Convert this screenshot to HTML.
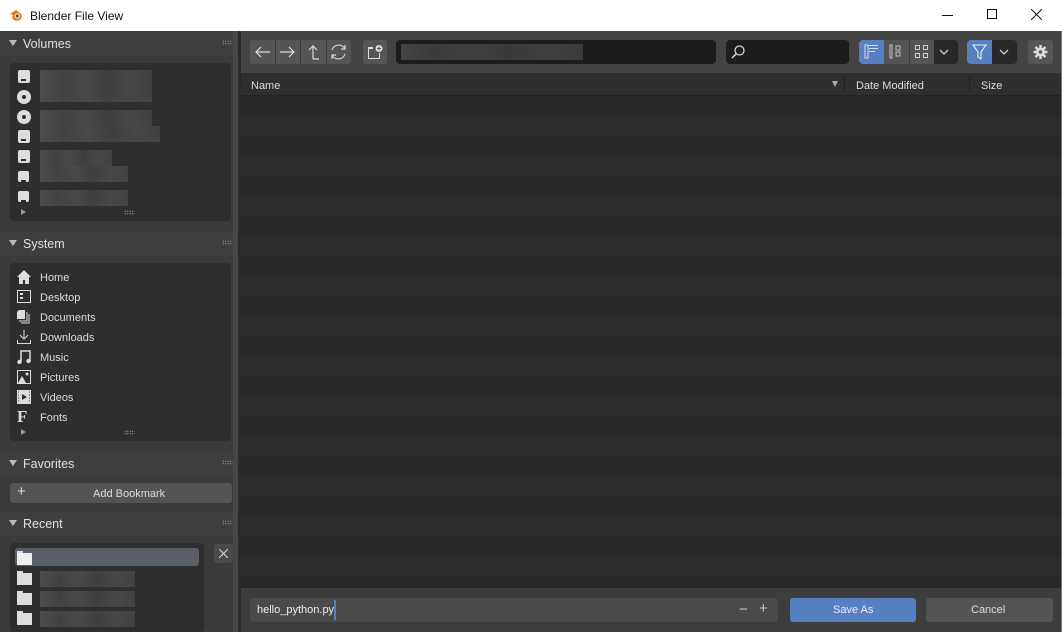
<!DOCTYPE html>
<html><head><meta charset="utf-8"><style>
*{box-sizing:border-box;margin:0;padding:0}
body{width:1062px;height:632px;overflow:hidden;background:#2b2b2b;font-family:"Liberation Sans",sans-serif;font-size:11px;color:#ddd;position:relative}
.a{position:absolute}
.title{left:0;top:0;width:1062px;height:31px;background:#fff;color:#111;font-size:12px}
.side{left:0;top:31px;width:241px;height:601px;background:#3a3a3a}
.hdr{left:0;width:233px;height:24px;background:#3e3e3e;color:#e0e0e0;font-size:12.5px}
.hdr .t{left:23px;top:5px}
.hdr .tri{left:9px;top:8px;width:0;height:0;border-left:4px solid transparent;border-right:4px solid transparent;border-top:6px solid #bbb}
.hdr .dots{left:222px;top:8px;width:11px;height:5px;background-image:radial-gradient(#999 0.6px,transparent 0.7px);background-size:2.5px 2.5px}
.box{background:#2e2e2e;border-radius:4px;left:10px;width:221px}
.row{position:absolute;left:30px;font-size:11px;color:#ddd}
.ic{position:absolute;left:7px;width:14px;height:14px}
.blur{position:absolute;left:30px;height:16px;background:linear-gradient(90deg,#555 0,#474747 20%,#505050 40%,#444 60%,#4e4e4e 80%,#474747 100%);opacity:.8}
.btn{position:absolute;background:#545454;border-radius:3px;height:23px}
.drv{position:absolute;left:8px;width:12px;height:13px;background:#ddd;border-radius:2px}
.drv:after{content:"";position:absolute;left:3px;top:9px;width:5px;height:2px;background:#2e2e2e}
.cd{position:absolute;left:7px;width:14px;height:14px;border-radius:50%;background:#ddd}
.cd:after{content:"";position:absolute;left:5px;top:5px;width:4px;height:4px;border-radius:50%;background:#2e2e2e}
.fold{position:absolute;left:7px;width:15px;height:12px;background:#ddd}
.fold:before{content:"";position:absolute;left:0;top:-2px;width:6px;height:2px;background:#ddd}
</style></head><body>
<div class="a title">
<svg class="a" style="left:9px;top:8px" width="15" height="14" viewBox="0 0 15 14"><path d="M1 6 L7 2 L11 5 Q14 7 12 11 Q9 14 5 12 Q2 10 4 7 Z" fill="#e87d0d"/><circle cx="8.3" cy="8" r="2.6" fill="#fff"/><circle cx="8.3" cy="8" r="1.6" fill="#265787"/></svg>
<span class="a" style="left:30px;top:9px">Blender File View</span>
<div class="a" style="left:942px;top:15px;width:11px;height:1px;background:#111"></div>
<div class="a" style="left:987px;top:9px;width:10px;height:10px;border:1px solid #111"></div>
<svg class="a" style="left:1031px;top:9px" width="11" height="11"><path d="M0 0L11 11M11 0L0 11" stroke="#111" stroke-width="1"/></svg>
</div>

<div class="a side"></div>
<div class="a" style="left:233px;top:31px;width:5px;height:601px;background:#474747"></div>
<div class="a" style="left:238px;top:31px;width:3px;height:601px;background:#2a2a2a"></div>

<!-- Volumes -->
<div class="a hdr" style="top:32px"><div class="a tri"></div><span class="a t">Volumes</span><div class="a dots"></div></div>
<div class="a box" style="top:63px;height:158px">
<div class="drv" style="top:7px"></div><div class="blur" style="top:7px;width:112px"></div>
<div class="cd" style="top:27px"></div><div class="blur" style="top:23px;width:112px"></div>
<div class="cd" style="top:47px"></div><div class="blur" style="top:47px;width:112px"></div>
<div class="drv" style="top:67px"></div><div class="blur" style="top:63px;width:120px"></div>
<div class="drv" style="top:87px"></div><div class="blur" style="top:87px;width:72px"></div>
<div class="drv" style="top:108px;width:11px;height:11px"></div><div class="blur" style="top:103px;width:88px"></div>
<div class="drv" style="top:128px;width:11px;height:11px"></div><div class="blur" style="top:127px;width:88px"></div>
<div class="a" style="left:11px;top:146px;border-top:3px solid transparent;border-bottom:3px solid transparent;border-left:5px solid #999"></div>
<div class="a" style="left:114px;top:147px;width:11px;height:5px;background-image:radial-gradient(#999 0.6px,transparent 0.7px);background-size:2.5px 2.5px"></div>
</div>

<!-- System -->
<div class="a hdr" style="top:232px"><div class="a tri"></div><span class="a t">System</span><div class="a dots"></div></div>
<div class="a box" style="top:263px;height:178px">
<svg class="ic" style="top:7px" viewBox="0 0 14 14"><path d="M0 7L7 0L14 7H12V14H8V10H6V14H2V7Z" fill="#ddd"/></svg><span class="row" style="top:9px">Home</span>
<svg class="ic" style="top:27px" viewBox="0 0 14 14"><rect x="0.5" y="0.5" width="13" height="12" fill="none" stroke="#ddd"/><rect x="3" y="3" width="3" height="2" fill="#ddd"/><rect x="3" y="7" width="3" height="2" fill="#ddd"/></svg><span class="row" style="top:29px">Desktop</span>
<svg class="ic" style="top:47px" viewBox="0 0 14 14"><path d="M2 0H8V9H0V2Z" fill="#ddd"/><path d="M10 2V11H2M12 4V13H4" stroke="#ddd" fill="none"/></svg><span class="row" style="top:49px">Documents</span>
<svg class="ic" style="top:67px" viewBox="0 0 14 14"><path d="M7 0V9M3 5L7 9L11 5M0.5 10V13.5H13.5V10" stroke="#ddd" fill="none"/></svg><span class="row" style="top:69px">Downloads</span>
<svg class="ic" style="top:87px" viewBox="0 0 14 14"><path d="M4 12V1H13V11" stroke="#ddd" stroke-width="1.5" fill="none"/><circle cx="2.5" cy="12" r="2.2" fill="#ddd"/><circle cx="11.5" cy="11" r="2.2" fill="#ddd"/></svg><span class="row" style="top:89px">Music</span>
<svg class="ic" style="top:107px" viewBox="0 0 14 14"><rect x="0.5" y="0.5" width="13" height="13" fill="none" stroke="#ddd"/><path d="M1 13L5 6L9 13Z" fill="#ddd"/><circle cx="10" cy="4" r="1.5" fill="#ddd"/></svg><span class="row" style="top:109px">Pictures</span>
<svg class="ic" style="top:127px" viewBox="0 0 14 14"><rect x="0" y="0" width="14" height="14" fill="#ddd"/><path d="M5 4L10 7L5 10Z" fill="#2e2e2e"/><path d="M1 2h1M1 5h1M1 8h1M1 11h1M12 2h1M12 5h1M12 8h1M12 11h1" stroke="#2e2e2e"/></svg><span class="row" style="top:129px">Videos</span>
<span class="a" style="left:7px;top:144px;font-family:'Liberation Serif',serif;font-weight:bold;font-size:17px;color:#ddd">F</span><span class="row" style="top:149px">Fonts</span>
<div class="a" style="left:11px;top:166px;border-top:3px solid transparent;border-bottom:3px solid transparent;border-left:5px solid #999"></div>
<div class="a" style="left:114px;top:167px;width:11px;height:5px;background-image:radial-gradient(#999 0.6px,transparent 0.7px);background-size:2.5px 2.5px"></div>
</div>

<!-- Favorites -->
<div class="a hdr" style="top:452px"><div class="a tri"></div><span class="a t">Favorites</span><div class="a dots"></div></div>
<div class="btn" style="left:10px;top:483px;width:222px;height:20px"><span class="a" style="left:7px;top:0px;font-size:15px;color:#ddd">+</span><span class="a" style="left:83px;top:5px">Add Bookmark</span></div>

<!-- Recent -->
<div class="a hdr" style="top:512px"><div class="a tri"></div><span class="a t">Recent</span><div class="a dots"></div></div>
<div class="a box" style="top:543px;width:194px;height:89px">
<div class="a" style="left:5px;top:5px;width:184px;height:18px;background:#5a5e66;border-radius:3px"></div>
<div class="fold" style="top:10px;background:#eee"></div>
<div class="fold" style="top:30px"></div><div class="blur" style="left:30px;top:28px;width:95px"></div>
<div class="fold" style="top:50px"></div><div class="blur" style="left:30px;top:48px;width:95px"></div>
<div class="fold" style="top:70px"></div><div class="blur" style="left:30px;top:68px;width:95px"></div>
</div>
<div class="btn" style="left:214px;top:544px;width:19px;height:19px;background:#4a4a4a"><svg class="a" style="left:5px;top:5px" width="9" height="9"><path d="M0 0L9 9M9 0L0 9" stroke="#ddd"/></svg></div>

<!-- Right -->
<div class="a" style="left:241px;top:31px;width:820px;height:42px;background:#444"></div>
<div class="btn" style="left:250px;top:40px;width:101px;height:24px;background:#555"></div>
<div class="a" style="left:275px;top:40px;width:1px;height:24px;background:#3a3a3a"></div>
<div class="a" style="left:300px;top:40px;width:1px;height:24px;background:#3a3a3a"></div>
<div class="a" style="left:326px;top:40px;width:1px;height:24px;background:#3a3a3a"></div>
<svg class="a" style="left:250px;top:40px" width="101" height="24"><g stroke="#ddd" fill="none" stroke-width="1.2"><path d="M6 12H20M11 7L6 12L11 17"/><path d="M30 12H44M39 7L44 12L39 17"/><path d="M63 19V6M59 10L63 6L67 10M63 19H69"/><path d="M82 10A7 7 0 0 1 95 9M95 5V9H91M95 14A7 7 0 0 1 82 15M82 19V15H86"/></g></svg>
<div class="btn" style="left:363px;top:40px;width:24px;height:24px;background:#555"><svg class="a" style="left:5px;top:5px" width="15" height="14"><path d="M0.5 4V13.5H11.5V8" stroke="#ddd" fill="none"/><path d="M0 2H5V4H0Z" fill="#ddd"/><circle cx="11" cy="3.5" r="3.5" fill="#ddd"/><path d="M11 1.5V5.5M9 3.5H13" stroke="#555"/></svg></div>
<div class="a" style="left:396px;top:40px;width:320px;height:24px;background:#1d1d1d;border-radius:4px"><div class="blur" style="left:5px;top:4px;width:182px;opacity:.7"></div></div>
<div class="a" style="left:726px;top:40px;width:123px;height:24px;background:#1d1d1d;border-radius:4px"><svg class="a" style="left:5px;top:5px" width="14" height="14"><circle cx="8.5" cy="5.5" r="4.5" stroke="#ddd" fill="none" stroke-width="1.2"/><path d="M5 9L1 13" stroke="#ddd" stroke-width="1.4"/></svg></div>
<div class="a" style="left:859px;top:40px;width:99px;height:24px;background:#282828;border-radius:4px;overflow:hidden">
<div class="a" style="left:0;top:0;width:25px;height:24px;background:#5680c2"></div>
<div class="a" style="left:25px;top:0;width:50px;height:24px;background:#545454"></div>
<div class="a" style="left:50px;top:0;width:1px;height:24px;background:#3a3a3a"></div>
<svg class="a" style="left:0;top:0" width="99" height="24"><g fill="#ddd"><rect x="6" y="5" width="3" height="13" fill="none" stroke="#ddd"/><rect x="10" y="5" width="9" height="1"/><rect x="10" y="8" width="9" height="1"/><rect x="10" y="11" width="6" height="1"/><rect x="31" y="5" width="2" height="13" fill="none" stroke="#bbb"/><rect x="37" y="6" width="4" height="4" fill="none" stroke="#bbb"/><rect x="37" y="12" width="4" height="4" fill="none" stroke="#bbb"/></g><g fill="none" stroke="#ccc"><rect x="56.5" y="5.5" width="4" height="4"/><rect x="64.5" y="5.5" width="4" height="4"/><rect x="56.5" y="13.5" width="4" height="4"/><rect x="64.5" y="13.5" width="4" height="4"/><path d="M81 10L85 14L89 10" stroke-width="1.3"/></g></svg>
</div>
<div class="a" style="left:967px;top:40px;width:50px;height:24px;background:#282828;border-radius:4px;overflow:hidden"><div class="a" style="left:0;top:0;width:25px;height:24px;background:#5680c2"></div>
<svg class="a" style="left:0;top:0" width="50" height="24"><path d="M6 5H19L14 12V19L11 17V12Z" stroke="#eee" fill="none" stroke-width="1.1"/><path d="M33 10L37 14L41 10" stroke="#ccc" fill="none" stroke-width="1.3"/></svg></div>
<div class="btn" style="left:1028px;top:40px;width:25px;height:24px;background:#555"><svg class="a" style="left:5px;top:5px" width="15" height="14" viewBox="0 0 15 14"><circle cx="7.5" cy="7" r="4.5" fill="#ddd"/><g stroke="#ddd" stroke-width="2.4"><path d="M7.5 0V14M0.5 7H14.5M2.5 2L12.5 12M12.5 2L2.5 12"/></g><circle cx="7.5" cy="7" r="1.8" fill="#555"/></svg></div>

<div class="a" style="left:241px;top:73px;width:820px;height:23px;background:#2f2f2f;border-bottom:1px solid #222"></div>
<span class="a" style="left:251px;top:80px">Name</span>
<div class="a" style="left:832px;top:81px;border-left:3px solid transparent;border-right:3px solid transparent;border-top:6px solid #aaa"></div>
<div class="a" style="left:844px;top:76px;width:1px;height:16px;background:#222"></div>
<span class="a" style="left:856px;top:80px">Date Modified</span>
<div class="a" style="left:969px;top:76px;width:1px;height:16px;background:#222"></div>
<span class="a" style="left:981px;top:80px">Size</span>

<div class="a" style="left:241px;top:97px;width:820px;height:491px;background:repeating-linear-gradient(180deg,#282828 0,#282828 20px,#2c2c2c 20px,#2c2c2c 40px)"></div>

<div class="a" style="left:241px;top:588px;width:820px;height:44px;background:#3d3d3d"></div>
<div class="a" style="left:250px;top:598px;width:528px;height:24px;background:#4a4a4a;border-radius:3px"><span class="a" style="left:7px;top:6px;color:#eee">hello_python.py</span><div class="a" style="left:84px;top:2px;width:2px;height:20px;background:#5680c2"></div>
<span class="a" style="left:489px;top:3px;font-size:15px;color:#ccc">−</span><span class="a" style="left:509px;top:2px;font-size:15px;color:#ccc">+</span></div>
<div class="btn" style="left:790px;top:598px;width:126px;height:24px;background:#5680c2"><span class="a" style="left:43px;top:6px;color:#eee">Save As</span></div>
<div class="btn" style="left:926px;top:598px;width:127px;height:24px;background:#545454"><span class="a" style="left:45px;top:6px;color:#ddd">Cancel</span></div>
<div class="a" style="left:1061px;top:31px;width:1px;height:601px;background:#777"></div>
</body></html>
